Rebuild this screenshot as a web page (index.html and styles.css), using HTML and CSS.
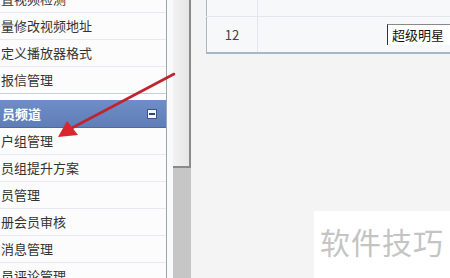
FILE: index.html
```html
<!DOCTYPE html>
<html lang="zh-CN">
<head>
    <meta charset="UTF-8">
    <title>会员频道</title>
    <link rel="stylesheet" href="styles.css">
</head>
<body>
    <div class="page">
        <div class="sidebar">
            <ul class="menu-box">
                <li>置视频检测</li>
                <li>量修改视频地址</li>
                <li>定义播放器格式</li>
                <li>报信管理</li>
            </ul>
            <div class="menu-box">
                <div class="menu-head">
                    <span>员频道</span>
                    <span class="toggle"></span>
                </div>
                <ul>
                    <li>户组管理</li>
                    <li>员组提升方案</li>
                    <li>员管理</li>
                    <li>册会员审核</li>
                    <li>消息管理</li>
                    <li>员评论管理</li>
                </ul>
            </div>
        </div>
        <div class="gutter"></div>
        <div class="scrollbar">
            <div class="thumb"></div>
        </div>
        <div class="main">
            <table class="grid">
                <tr class="cut-row">
                    <td class="num"></td>
                    <td></td>
                </tr>
                <tr>
                    <td class="num">12</td>
                    <td class="pick"><span class="select">超级明星</span></td>
                </tr>
            </table>
        </div>
    </div>

    <!-- red arrow drawn over the menu -->
    <svg class="arrow" width="450" height="278" viewBox="0 0 450 278">
        <line x1="174" y1="74" x2="70" y2="129" stroke="#c0242e" stroke-width="2.6" stroke-linecap="round"/>
        <polygon points="58,137 67,121 78,135" fill="#d9262e"/>
    </svg>

    <div class="watermark">软件技巧</div>
</body>
</html>
```

FILE: styles.css
```css
body {
    margin: 0;
    font-family: "Noto Sans CJK SC", "Noto Sans", sans-serif;
    font-size: 13px;
    color: #333;
    background: #f4f4f4;
    overflow: hidden;
}
.page {
    display: flex;
    height: 278px;
    overflow: hidden;
}
.sidebar {
    width: 166px;
    flex: none;
    margin-top: -14px;
    border-right: 1px solid #97a6b8;
    background: #fff;
}
ul {
    list-style: none;
    margin: 0;
    padding: 0;
}
.menu-box {
    background: #fcfcfc;
    border-bottom: 1px solid #c9d0d9;
}
.menu-box + .menu-box {
    margin-top: 6px;
    border-bottom: none;
}
.menu-box li {
    height: 26px;
    line-height: 26px;
    padding-left: 1px;
    border-bottom: 1px solid #e6e9ee;
    white-space: nowrap;
}
.menu-box li:last-child {
    border-bottom: none;
}
.menu-head {
    display: flex;
    align-items: center;
    justify-content: space-between;
    height: 27px;
    padding: 0 9px 0 2px;
    background: linear-gradient(#6f8dc6, #5f7db7);
    color: #fff;
    font-weight: bold;
    border-bottom: 1px solid #4f6aa0;
}
.toggle {
    position: relative;
    width: 8px;
    height: 8px;
    background: #f4f6fa;
    border: 1px solid #3c5488;
}
.toggle::after {
    content: "";
    position: absolute;
    left: 1px;
    right: 1px;
    top: 3px;
    height: 2px;
    background: #2f4576;
}
.gutter {
    width: 6px;
    flex: none;
    background: #fafafa;
}
.scrollbar {
    width: 18px;
    flex: none;
    background: #c6c6c6;
}
.thumb {
    height: 168px;
    background: linear-gradient(90deg, #f2f2f2, #e6e6e6);
    border-right: 2px solid #8a8a8a;
    border-bottom: 2px solid #8a8a8a;
    box-sizing: border-box;
}
.main {
    flex: 1;
    padding-left: 15px;
    overflow: hidden;
}
.grid {
    margin-top: -20px;
    width: 400px;
    border-collapse: collapse;
    background: #f7f8fa;
    border-left: 1px solid #a9b6c6;
    border-bottom: 2px solid #a9b6c6;
}
.grid td {
    border-top: 1px solid #e3e6ea;
    padding: 0;
}
.cut-row td {
    height: 24px;
}
.grid .num {
    width: 50px;
    height: 35px;
    text-align: center;
    color: #444;
    border-right: 1px solid #e3e6ea;
}
.pick {
    padding-left: 129px !important;
}
.select {
    display: inline-block;
    width: 120px;
    height: 20px;
    line-height: 20px;
    padding-left: 4px;
    background: #fff;
    border-left: 1px solid #333;
    border-top: 1px solid #888;
    color: #111;
}
.arrow {
    position: absolute;
    left: 0;
    top: 0;
    pointer-events: none;
}
.watermark {
    position: absolute;
    left: 314px;
    top: 211px;
    width: 136px;
    height: 67px;
    background: #fff;
    color: #c4c4c4;
    font-size: 30px;
    line-height: 60px;
    padding-left: 6px;
    box-sizing: border-box;
    letter-spacing: 1px;
}
```
